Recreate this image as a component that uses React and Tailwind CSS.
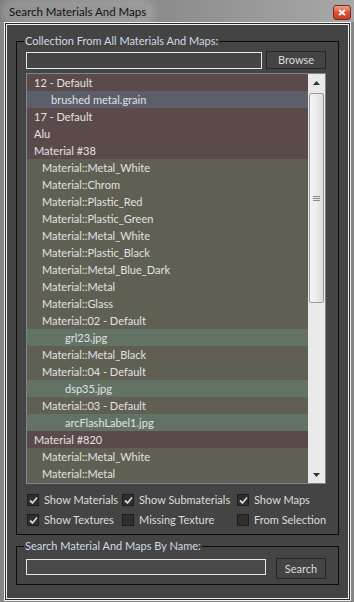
import React from "react";

const rows = [
  { t: "12 - Default", k: "m" },
  { t: "brushed metal.grain", k: "sel" },
  { t: "17 - Default", k: "m" },
  { t: "Alu", k: "m" },
  { t: "Material #38", k: "m" },
  { t: "Material::Metal_White", k: "s" },
  { t: "Material::Chrom", k: "s" },
  { t: "Material::Plastic_Red", k: "s" },
  { t: "Material::Plastic_Green", k: "s" },
  { t: "Material::Metal_White", k: "s" },
  { t: "Material::Plastic_Black", k: "s" },
  { t: "Material::Metal_Blue_Dark", k: "s" },
  { t: "Material::Metal", k: "s" },
  { t: "Material::Glass", k: "s" },
  { t: "Material::02 - Default", k: "s" },
  { t: "grl23.jpg", k: "t" },
  { t: "Material::Metal_Black", k: "s" },
  { t: "Material::04 - Default", k: "s" },
  { t: "dsp35.jpg", k: "t" },
  { t: "Material::03 - Default", k: "s" },
  { t: "arcFlashLabel1.jpg", k: "t" },
  { t: "Material #820", k: "m" },
  { t: "Material::Metal_White", k: "s" },
  { t: "Material::Metal", k: "s" },
];

const rowCls = {
  m: "bg-[#5b4a4a] pl-[7px]",
  sel: "bg-[#5c5e69] pl-[24px]",
  s: "bg-[#5f5f53] pl-[15px]",
  t: "bg-[#627366] pl-[38px]",
};

function Check({ checked, label, w }) {
  return (
    <div className={`flex items-center gap-[5px] ${w}`}>
      <span className="w-[12px] h-[12px] bg-[#2e2e2e] border border-[#1e1e1e] flex items-center justify-center shrink-0">
        {checked && (
          <svg width="9" height="9" viewBox="0 0 9 9">
            <path d="M1 4.5 L3.5 7 L8 1.5" stroke="#d4d4d4" strokeWidth="1.8" fill="none" />
          </svg>
        )}
      </span>
      <span className="text-[#dcdcdc] leading-[14px] whitespace-nowrap">{label}</span>
    </div>
  );
}

export default function App() {
  return (
    <div
      className="w-[354px] h-[602px] bg-[#858585] overflow-hidden flex flex-col text-[11px]"
      style={{ fontFamily: 'Lato, "Liberation Sans", Arial, sans-serif' }}
    >
      {/* title bar */}
      <div className="h-[22px] flex items-start justify-between pl-[7px] pr-[3px] bg-gradient-to-r from-[#7c7c7c] via-[#8e8e8e] to-[#a8a8a8] shrink-0">
        <span className="mt-[5px] text-[#111] text-[11.5px] leading-[14px] px-[2px] rounded-[6px] bg-[#a8a8a8]/50 shadow-[0_0_8px_6px_rgba(200,200,200,0.35)]">
          Search Materials And Maps
        </span>
        <div className="mt-[5px] w-[18px] h-[15px] rounded-[3px] border border-[#7a2a1c] bg-gradient-to-b from-[#f0a08a] via-[#dc5035] to-[#c4401f] flex items-center justify-center">
          <svg width="8" height="7" viewBox="0 0 8 7">
            <path d="M1 1 L7 6 M7 1 L1 6" stroke="#fff" strokeWidth="1.8" />
          </svg>
        </div>
      </div>

      {/* client frame */}
      <div className="ml-[4px] mr-[3px] h-[579px] border border-[#f2f2f2]">
        <div className="h-full border border-[#2a2a2a]">
          <div className="h-full border border-[#f2f2f2] bg-[#444444] px-[9px] pt-[9px]">
            {/* group 1 */}
            <fieldset className="border border-[#0c0c0c] h-[501px] px-[9px]">
              <legend className="ml-[-2px] px-[1px] text-[#d0dae6] leading-[14px]">
                Collection From All Materials And Maps:
              </legend>
              <div className="flex items-center mt-[3px] gap-[4px]">
                <div className="w-[236px] h-[17px] border border-[#e6e6e6] bg-[#444]" />
                <div className="w-[60px] h-[18px] border border-[#262626] bg-[#444] flex items-center justify-center text-[#dcdcdc] leading-[14px]">
                  Browse
                </div>
              </div>
              <div className="mt-[4px] w-[300px] h-[411px] border border-[#7e8692] flex bg-[#5f5f53]">
                <div className="flex-1 flex flex-col">
                  {rows.map((r, i) => (
                    <div
                      key={i}
                      className={`h-[17px] leading-[17px] text-[#e2e2e2] whitespace-nowrap ${rowCls[r.k]}`}
                    >
                      {r.t}
                    </div>
                  ))}
                </div>
                <div className="w-[17px] bg-[#e9e9e9] flex flex-col items-center">
                  <div className="h-[17px] flex items-center justify-center">
                    <svg width="7" height="4" viewBox="0 0 7 4">
                      <path d="M3.5 0 L7 4 L0 4 Z" fill="#333" />
                    </svg>
                  </div>
                  <div className="h-[2px]" />
                  <div className="w-[15px] h-[210px] rounded-[2px] border border-[#9a9a9a] bg-gradient-to-r from-[#f4f4f4] via-[#ececec] to-[#dcdcdc] flex items-center justify-center">
                    <svg width="7" height="7" viewBox="0 0 7 7">
                      <path d="M0 1.5 H7 M0 3.5 H7 M0 5.5 H7" stroke="#8a8a8a" strokeWidth="1" />
                    </svg>
                  </div>
                  <div className="flex-1" />
                  <div className="h-[17px] flex items-center justify-center">
                    <svg width="7" height="4" viewBox="0 0 7 4">
                      <path d="M0 0 L7 0 L3.5 4 Z" fill="#333" />
                    </svg>
                  </div>
                </div>
              </div>
              <div className="mt-[9px] ml-[1px] flex flex-col gap-[6px]">
                <div className="flex">
                  <Check checked label="Show Materials" w="w-[95px]" />
                  <Check checked label="Show Submaterials" w="w-[115px]" />
                  <Check checked label="Show Maps" w="" />
                </div>
                <div className="flex">
                  <Check checked label="Show Textures" w="w-[95px]" />
                  <Check label="Missing Texture" w="w-[115px]" />
                  <Check label="From Selection" w="" />
                </div>
              </div>
            </fieldset>

            {/* group 2 */}
            <fieldset className="mt-[4px] border border-[#0c0c0c] h-[46px] px-[9px]">
              <legend className="ml-[-2px] px-[1px] text-[#d0dae6] leading-[14px]">
                Search Material And Maps By Name:
              </legend>
              <div className="flex items-start gap-[10px] mt-[4px]">
                <div className="mt-[2px] w-[240px] h-[16px] border border-[#e6e6e6] bg-[#4a4a4a]" />
                <div className="mt-[1px] w-[50px] h-[21px] border border-[#262626] bg-[#444] flex items-center justify-center text-[#dcdcdc] leading-[14px]">
                  Search
                </div>
              </div>
            </fieldset>
          </div>
        </div>
      </div>
    </div>
  );
}
